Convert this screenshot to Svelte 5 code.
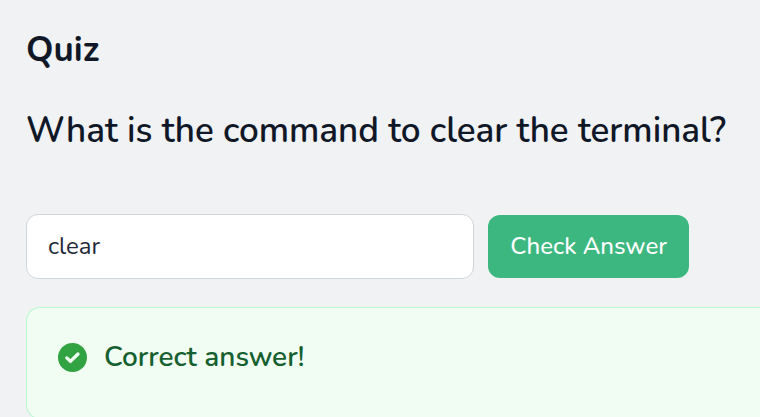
<script>
  let answer = $state('clear');
  let checked = $state(true);
  const correct = $derived(checked && answer.trim() === 'clear');

  function check(event) {
    event.preventDefault();
    checked = true;
  }
</script>

<main>
  <h1>Quiz</h1>
  <h2><label for="answer">What is the command to clear the terminal?</label></h2>

  <form onsubmit={check}>
    <input id="answer" type="text" autocomplete="off" bind:value={answer} oninput={() => (checked = false)} />
    <button type="submit">Check Answer</button>
  </form>

  {#if correct}
    <div class="result" role="status">
      <svg viewBox="0 0 28 28" aria-hidden="true">
        <circle cx="14" cy="14" r="14" fill="#32a342" />
        <path d="M8.5 14.4 12 17.8 19.3 10.6" fill="none" stroke="#f2fdf4" stroke-width="3.2" stroke-linecap="round" stroke-linejoin="round" />
      </svg>
      <p>Correct answer!</p>
    </div>
  {/if}
</main>

<style>
  :global(body) {
    margin: 0;
    background: #f0f2f4;
    overflow: hidden;
  }

  main {
    padding: 28px 0 0 26px;
    color: #101828;
    font-family: Nunito, Lato, sans-serif;
  }

  h1,
  h2 {
    margin: 0;
    font-size: 35px;
    line-height: 44px;
  }

  h1 {
    font-weight: 700;
  }

  h2 {
    margin-top: 37px;
    font-weight: 600;
  }

  form {
    display: flex;
    align-items: center;
    gap: 14px;
    margin: 61px 71px 28px 0;
  }

  input,
  button {
    box-sizing: border-box;
    border-radius: 12px;
    font: 400 24px/32px Nunito, Lato, sans-serif;
  }

  input {
    flex: 1;
    min-width: 0;
    height: 65px;
    padding: 14px 21px 16px;
    border: 1px solid #d1d5dc;
    background: #fff;
    color: #1e2939;
  }

  button {
    flex: none;
    height: 63px;
    padding: 0 22px 2px;
    border: 0;
    background: #3cb780;
    color: #fff;
    font-weight: 500;
    cursor: pointer;
  }

  .result {
    display: flex;
    align-items: flex-start;
    gap: 17px;
    padding: 31px 31px 43px;
    border: 1px solid #b9f8cf;
    border-right: 0;
    border-radius: 14px 0 0 14px;
    background: #f1fcf3;
    color: #166030;
  }

  .result svg {
    flex: none;
    width: 29px;
    height: 29px;
    margin-top: 4px;
  }

  .result p {
    margin: 0;
    font-size: 28px;
    font-weight: 600;
    line-height: 36px;
  }
</style>
